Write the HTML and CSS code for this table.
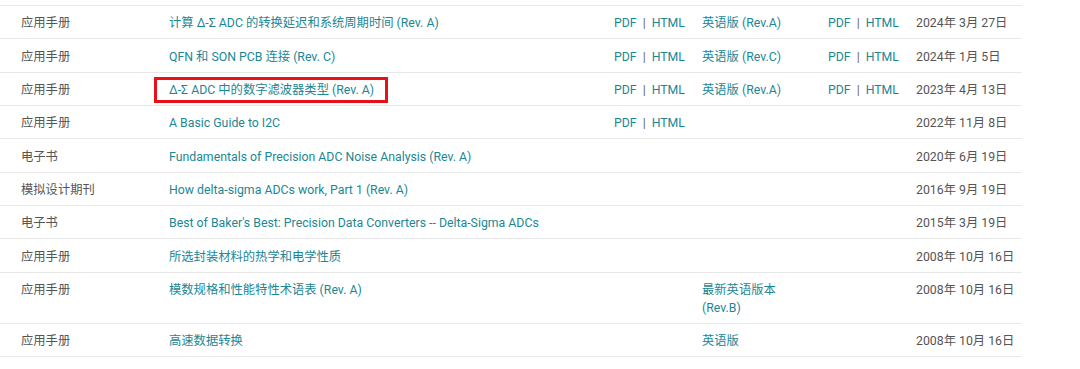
FILE: index.html
```html
<!DOCTYPE html>
<html lang="zh-CN">
<head>
<meta charset="utf-8">
<link rel="stylesheet" href="styles.css">
</head>
<body>
<div class="table">
  <div class="row">
    <div class="c type">应用手册</div>
    <div class="c title"><a>计算 Δ-Σ ADC 的转换延迟和系统周期时间 (Rev. A)</a></div>
    <div class="c fmt"><a>PDF</a><span class="sep">|</span><a>HTML</a></div>
    <div class="c en"><a>英语版 (Rev.A)</a></div>
    <div class="c fmt"><a>PDF</a><span class="sep">|</span><a>HTML</a></div>
    <div class="c date">2024年 3月 27日</div>
  </div>
  <div class="row">
    <div class="c type">应用手册</div>
    <div class="c title"><a>QFN 和 SON PCB 连接 (Rev. C)</a></div>
    <div class="c fmt"><a>PDF</a><span class="sep">|</span><a>HTML</a></div>
    <div class="c en"><a>英语版 (Rev.C)</a></div>
    <div class="c fmt"><a>PDF</a><span class="sep">|</span><a>HTML</a></div>
    <div class="c date">2024年 1月 5日</div>
  </div>
  <div class="row">
    <div class="c type">应用手册</div>
    <div class="c title marked"><a>Δ-Σ ADC 中的数字滤波器类型 (Rev. A)</a></div>
    <div class="c fmt"><a>PDF</a><span class="sep">|</span><a>HTML</a></div>
    <div class="c en"><a>英语版 (Rev.A)</a></div>
    <div class="c fmt"><a>PDF</a><span class="sep">|</span><a>HTML</a></div>
    <div class="c date">2023年 4月 13日</div>
  </div>
  <div class="row">
    <div class="c type">应用手册</div>
    <div class="c title"><a>A Basic Guide to I2C</a></div>
    <div class="c fmt"><a>PDF</a><span class="sep">|</span><a>HTML</a></div>
    <div class="c en"></div>
    <div class="c fmt"></div>
    <div class="c date">2022年 11月 8日</div>
  </div>
  <div class="row">
    <div class="c type">电子书</div>
    <div class="c title"><a>Fundamentals of Precision ADC Noise Analysis (Rev. A)</a></div>
    <div class="c fmt"></div>
    <div class="c en"></div>
    <div class="c fmt"></div>
    <div class="c date">2020年 6月 19日</div>
  </div>
  <div class="row">
    <div class="c type">模拟设计期刊</div>
    <div class="c title"><a>How delta-sigma ADCs work, Part 1 (Rev. A)</a></div>
    <div class="c fmt"></div>
    <div class="c en"></div>
    <div class="c fmt"></div>
    <div class="c date">2016年 9月 19日</div>
  </div>
  <div class="row">
    <div class="c type">电子书</div>
    <div class="c title"><a>Best of Baker's Best: Precision Data Converters -- Delta-Sigma ADCs</a></div>
    <div class="c fmt"></div>
    <div class="c en"></div>
    <div class="c fmt"></div>
    <div class="c date">2015年 3月 19日</div>
  </div>
  <div class="row">
    <div class="c type">应用手册</div>
    <div class="c title"><a>所选封装材料的热学和电学性质</a></div>
    <div class="c fmt"></div>
    <div class="c en"></div>
    <div class="c fmt"></div>
    <div class="c date">2008年 10月 16日</div>
  </div>
  <div class="row tall">
    <div class="c type">应用手册</div>
    <div class="c title"><a>模数规格和性能特性术语表 (Rev. A)</a></div>
    <div class="c fmt"></div>
    <div class="c en"><a>最新英语版本<br>(Rev.B)</a></div>
    <div class="c fmt"></div>
    <div class="c date">2008年 10月 16日</div>
  </div>
  <div class="row">
    <div class="c type">应用手册</div>
    <div class="c title"><a>高速数据转换</a></div>
    <div class="c fmt"></div>
    <div class="c en"><a>英语版</a></div>
    <div class="c fmt"></div>
    <div class="c date">2008年 10月 16日</div>
  </div>
</div>
</body>
</html>
```

FILE: styles.css
```css
html, body {
  margin: 0;
  padding: 0;
  background: #ffffff;
}
body {
  font-family: Roboto, "Noto Sans CJK SC", sans-serif;
  font-size: 12.3px;
  line-height: 18px;
  color: #555555;
}
.table {
  width: 1022px;
  margin-top: 5px;
  border-top: 1px solid #e8e8e8;
}
.row {
  display: grid;
  grid-template-columns: 169px 445px 88px 126px 88px 106px;
  border-bottom: 1px solid #e8e8e8;
}
.c {
  padding: 8.4px 0 5.94px;
  height: 18px;
  white-space: nowrap;
}
.row.tall .c {
  height: 36px;
}
.type {
  padding-left: 21px;
}
a {
  color: #1b8794;
  text-decoration: none;
}
.sep {
  color: #666666;
  margin: 0 6px;
}
.title {
  position: relative;
}
.marked::after {
  content: "";
  position: absolute;
  left: -15px;
  top: 4px;
  width: 228px;
  height: 20px;
  border: 3px solid #e8101a;
}
```
